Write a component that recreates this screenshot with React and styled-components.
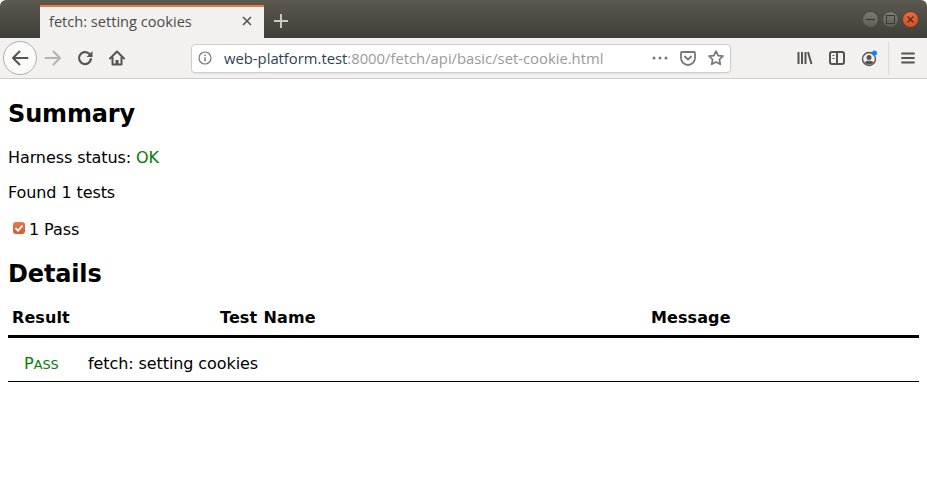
import React from 'react';
import styled, { createGlobalStyle } from 'styled-components';

const Global = createGlobalStyle`
  html, body { margin: 0; padding: 0; background: #fff; }
  body { font-family: "DejaVu Sans", sans-serif; color: #000; overflow: hidden; }
`;

const Page = styled.div`width: 927px; height: 489px; overflow: hidden; background: #fff;`;
const Chrome = styled.header`
  border-bottom: 1px solid #cfcdcb;
  height: 78px;
`;
const TabBar = styled.div`
  height: 38px;
  display: flex;
  align-items: stretch;
  padding-left: 40px;
  background: linear-gradient(#5b5950, #3f3e38);
  border-radius: 6px 6px 0 0;
`;
const Tab = styled.div`
  width: 224px;
  background: #f2f1ef;
  border-top: 2px solid #f0794a;
  margin-top: 5px;
  display: flex;
  align-items: center;
  justify-content: space-between;
  padding: 0 11px 3px 9px;
  box-sizing: border-box;
  font: 14.6px "Open Sans", "Noto Sans", sans-serif;
  color: #4c4b47;
`;
const NewTab = styled.div`
  width: 34px;
  display: flex;
  align-items: center;
  justify-content: center;
  padding-top: 4px;
`;
const Spacer = styled.div`flex: 1;`;
const WinButtons = styled.div`
  display: flex;
  align-items: center;
  gap: 3px;
  padding: 0 8px 0 0;
`;
const WinBtn = styled.div`
  width: 17px;
  height: 17px;
  box-sizing: border-box;
  border-radius: 50%;
  background: ${p => (p.$close ? 'linear-gradient(#f0683a,#d9501f)' : 'linear-gradient(#7c7b73,#5e5d56)')};
  border: 1px solid #45443e;
  display: flex;
  align-items: center;
  justify-content: center;
`;
const Toolbar = styled.div`
  height: 40px;
  background: #f2f1ef;
  display: flex;
  align-items: center;
  padding: 0 3px;
`;
const BackCircle = styled.div`
  width: 34px;
  height: 34px;
  box-sizing: border-box;
  border-radius: 50%;
  border: 1px solid #aeadab;
  background: #fbfbfa;
  display: flex;
  align-items: center;
  justify-content: center;
  flex: none;
`;
const IconSlot = styled.div`
  width: ${p => p.$w || 32}px;
  display: flex;
  align-items: center;
  justify-content: center;
  flex: none;
`;
const UrlBar = styled.div`
  width: 540px;
  height: 29px;
  margin-left: 58px;
  background: #fff;
  border: 1px solid #cfcdcb;
  border-radius: 4px;
  box-sizing: border-box;
  display: flex;
  align-items: center;
  box-shadow: 0 1px 2px rgba(0,0,0,.06);
`;
const UrlText = styled.div`
  flex: 1;
  font: 14.8px "Open Sans", "Noto Sans", sans-serif;
  color: #2f3f52;
  white-space: nowrap;
  padding-left: 6px;
`;
const Dim = styled.span`color: #9a9a9a;`;
const Divider = styled.div`width: 1px; height: 33px; background: #dcdad8; margin: 0 3px 0 3px;`;
const Content = styled.main`padding: 0 8px;`;
const H2 = styled.h2`
  font-size: 24px;
  font-weight: 700;
  line-height: 28px;
  letter-spacing: -0.15px;
  margin: ${p => p.$m};
`;
const P = styled.p`
  font-size: 16px;
  line-height: 19px;
  letter-spacing: -0.09px;
  margin: ${p => p.$m || '0'};
`;
const Ok = styled.span`color: green;`;
const Check = styled.span`
  display: inline-block;
  width: 12px;
  height: 12px;
  margin: 0 4px 0 5px;
  background: linear-gradient(#e07a4c, #cf5f33);
  border-radius: 3px;
  vertical-align: 1px;
`;
const HeadRow = styled.div`
  display: grid;
  grid-template-columns: 208px 431px 1fr;
  margin-top: 20px;
  padding: 0 4px 8px;
  height: 19px;
  font-size: 16px;
  line-height: 19px;
  font-weight: 700;
  letter-spacing: 0.1px;
  word-spacing: 0.7px;
  border-bottom: 3px solid #000;
`;
const BodyRow = styled.div`
  display: flex;
  height: 35px;
  padding-top: 8px;
  align-items: center;
  border-bottom: 1px solid #000;
  font-size: 16px;
  letter-spacing: -0.09px;
`;
const Status = styled.span`
  color: green;
  width: 80px;
  padding-left: 16px;
  box-sizing: border-box;
  letter-spacing: 0;
`;
const SmallCap = styled.span`
  font-size: 12.8px;
  text-transform: uppercase;
`;

const I = { fill: 'none', stroke: '#55544f', strokeWidth: 2, strokeLinecap: 'round', strokeLinejoin: 'round' };

export default function App() {
  return (
    <Page>
      <Global />
      <Chrome>
        <TabBar>
          <Tab>
            <span>fetch: setting cookies</span>
            <svg width="12" height="12" viewBox="0 0 12 12"><path d="M2 2l8 8M10 2l-8 8" stroke="#55544f" strokeWidth="1.6" /></svg>
          </Tab>
          <NewTab>
            <svg width="14" height="14" viewBox="0 0 14 14"><path d="M7 0v14M0 7h14" stroke="#c9c8c2" strokeWidth="2" /></svg>
          </NewTab>
          <Spacer />
          <WinButtons>
            <WinBtn><svg width="11" height="11" viewBox="0 0 11 11"><path d="M1 5.500h9" stroke="#3a3934" strokeWidth="1.200" /></svg></WinBtn>
            <WinBtn><svg width="11" height="11" viewBox="0 0 11 11"><rect x="1.500" y="1.500" width="8" height="8" fill="none" stroke="#3a3934" /></svg></WinBtn>
            <WinBtn $close><svg width="11" height="11" viewBox="0 0 11 11"><path d="M2.500 2.500l6 6M8.500 2.500l-6 6" stroke="#3a3934" strokeWidth="1.300" /></svg></WinBtn>
          </WinButtons>
        </TabBar>
        <Toolbar>
          <BackCircle>
            <svg width="18" height="16" viewBox="0 0 18 16"><path d="M16.500 8H2M8.500 1.500L2 8l6.500 6.500" {...I} /></svg>
          </BackCircle>
          <IconSlot $w={32}>
            <svg width="18" height="16" viewBox="0 0 18 16"><path d="M1.500 8H16M9.500 1.500L16 8l-6.500 6.500" {...I} stroke="#b4b3b1" /></svg>
          </IconSlot>
          <IconSlot $w={32}>
            <svg width="16" height="16" viewBox="0 0 16 16"><path d="M14 9a6 6 0 1 1-2-5.500L14 5.500" {...I} strokeWidth="2.200" /><path d="M15.500 1v6H9.500z" fill="#55544f" /></svg>
          </IconSlot>
          <IconSlot $w={32}>
            <svg width="16" height="16" viewBox="0 0 16 16"><path d="M1 8.500l7-7 7 7" {...I} /><path d="M3.500 7.500v7h9v-7" {...I} /><path d="M6.500 14.500V10h3v4.500z" fill="#55544f" /></svg>
          </IconSlot>
          <UrlBar>
            <IconSlot $w={26}>
              <svg width="14" height="14" viewBox="0 0 14 14"><circle cx="7" cy="7" r="6" fill="none" stroke="#777" strokeWidth="1.200" /><path d="M7 6.200v4M7 3.500v1.400" stroke="#777" strokeWidth="1.400" /></svg>
            </IconSlot>
            <UrlText>web-platform.test<Dim>:8000/fetch/api/basic/set-cookie.html</Dim></UrlText>
            <IconSlot $w={28}>
              <svg width="16" height="4" viewBox="0 0 16 4"><circle cx="2" cy="2" r="1.500" fill="#777" /><circle cx="8" cy="2" r="1.500" fill="#777" /><circle cx="14" cy="2" r="1.500" fill="#777" /></svg>
            </IconSlot>
            <IconSlot $w={28}>
              <svg width="16" height="15" viewBox="0 0 16 15"><path d="M2 1h12a1 1 0 0 1 1 1v5a7 7 0 0 1-14 0V2a1 1 0 0 1 1-1zM4.800 5.500L8 8.500l3.200-3" fill="none" stroke="#777" strokeWidth="1.800" strokeLinecap="round" strokeLinejoin="round" /></svg>
            </IconSlot>
            <IconSlot $w={28}>
              <svg width="16" height="16" viewBox="0 0 16 16"><path d="M8 1.200l2.100 4.400 4.800.6-3.500 3.300.9 4.800L8 12l-4.300 2.300.9-4.800L1.100 6.200l4.800-.6z" fill="none" stroke="#777" strokeWidth="1.700" strokeLinejoin="round" /></svg>
            </IconSlot>
          </UrlBar>
          <Spacer />
          <IconSlot $w={32}>
            <svg width="16" height="14" viewBox="0 0 16 14"><path d="M1.500 1v12M5 1v12M8.500 1v12M11 1l3.500 12" {...I} strokeLinecap="butt" /></svg>
          </IconSlot>
          <IconSlot $w={32}>
            <svg width="16" height="14" viewBox="0 0 16 14"><rect x="1" y="1" width="14" height="12" rx="2" {...I} /><path d="M8 1v12" {...I} /><path d="M3.500 4.500h2M3.500 7.500h2" stroke="#55544f" strokeWidth="1.200" /></svg>
          </IconSlot>
          <IconSlot $w={32}>
            <svg width="17" height="17" viewBox="0 0 17 17"><circle cx="8" cy="9" r="6.500" fill="none" stroke="#55544f" strokeWidth="1.400" /><circle cx="8" cy="7.500" r="2.500" fill="#55544f" /><path d="M3.500 12.500c1-2.500 8-2.500 9 0-2 2.500-7 2.500-9 0z" fill="#55544f" /><circle cx="13.500" cy="3" r="2.500" fill="#0a84ff" /></svg>
          </IconSlot>
          <Divider />
          <IconSlot $w={32}>
            <svg width="14" height="12" viewBox="0 0 14 12"><path d="M1 1.500h12M1 6h12M1 10.500h12" stroke="#55544f" strokeWidth="1.800" strokeLinecap="round" /></svg>
          </IconSlot>
        </Toolbar>
      </Chrome>
      <Content>
        <H2 $m="21px 0 0">Summary</H2>
        <P $m="20px 0 0">Harness status: <Ok>OK</Ok></P>
        <P $m="16px 0 0">Found 1 tests</P>
        <P $m="18px 0 0">
          <Check>
            <svg width="12" height="12" viewBox="0 0 12 12" style={{ display: 'block' }}><path d="M2.500 6.200l2.500 2.500 4.500-5" fill="none" stroke="#fff" strokeWidth="1.800" /></svg>
          </Check>
          1 Pass
        </P>
        <H2 $m="21px 0 0">Details</H2>
        <HeadRow><span>Result</span><span>Test Name</span><span>Message</span></HeadRow>
        <BodyRow><Status>P<SmallCap>ass</SmallCap></Status><span>fetch: setting cookies</span></BodyRow>
      </Content>
    </Page>
  );
}
